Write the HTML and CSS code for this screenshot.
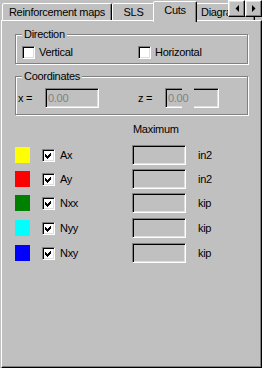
FILE: index.html
```html
<!DOCTYPE html>
<html>
<head>
<meta charset="utf-8">
<link rel="stylesheet" href="styles.css">
</head>
<body>
<div class="tabctl">
  <div class="tabs">
    <div class="tab t1">Reinforcement maps</div>
    <div class="tab t2">SLS</div>
    <div class="tab t3 sel">Cuts</div>
    <div class="tab t4">Diagrams</div>
    <div class="scroller">
      <div class="sbtn"><svg width="4" height="7" viewBox="0 0 4 7"><polygon points="4,0 4,7 0.5,3.5" fill="#000"/></svg></div>
      <div class="sbtn"><svg width="4" height="7" viewBox="0 0 4 7"><polygon points="0,0 0,7 3.5,3.5" fill="#000"/></svg></div>
    </div>
  </div>
  <div class="panel">
    <div class="group dir">
      <span class="gtitle">Direction</span>
      <div class="optrow">
        <label class="opt o1"><span class="chk"></span><span class="lbl">Vertical</span></label>
        <label class="opt"><span class="chk"></span><span class="lbl">Horizontal</span></label>
      </div>
    </div>
    <div class="group coord">
      <span class="gtitle">Coordinates</span>
      <div class="coordrow">
        <span class="clbl">x =</span>
        <span class="field dis cx">0.00</span>
        <span class="clbl">z =</span>
        <span class="field dis cz">0.00</span>
      </div>
    </div>
    <div class="maxhead">Maximum</div>
    <div class="list">
      <div class="row">
        <span class="sw" style="background:#ffff00"></span>
        <span class="chk on"><svg width="9" height="9" viewBox="0 0 9 9"><polygon points="1,3 3,5 7,1 7,4 3,8 1,6" fill="#000" shape-rendering="crispEdges"/></svg></span>
        <span class="name">Ax</span>
        <span class="field"></span>
        <span class="unit">in2</span>
      </div>
      <div class="row">
        <span class="sw" style="background:#ff0000"></span>
        <span class="chk on"><svg width="9" height="9" viewBox="0 0 9 9"><polygon points="1,3 3,5 7,1 7,4 3,8 1,6" fill="#000" shape-rendering="crispEdges"/></svg></span>
        <span class="name">Ay</span>
        <span class="field"></span>
        <span class="unit">in2</span>
      </div>
      <div class="row">
        <span class="sw" style="background:#008000"></span>
        <span class="chk on"><svg width="9" height="9" viewBox="0 0 9 9"><polygon points="1,3 3,5 7,1 7,4 3,8 1,6" fill="#000" shape-rendering="crispEdges"/></svg></span>
        <span class="name">Nxx</span>
        <span class="field"></span>
        <span class="unit">kip</span>
      </div>
      <div class="row">
        <span class="sw" style="background:#00ffff"></span>
        <span class="chk on"><svg width="9" height="9" viewBox="0 0 9 9"><polygon points="1,3 3,5 7,1 7,4 3,8 1,6" fill="#000" shape-rendering="crispEdges"/></svg></span>
        <span class="name">Nyy</span>
        <span class="field"></span>
        <span class="unit">kip</span>
      </div>
      <div class="row">
        <span class="sw" style="background:#0000ff"></span>
        <span class="chk on"><svg width="9" height="9" viewBox="0 0 9 9"><polygon points="1,3 3,5 7,1 7,4 3,8 1,6" fill="#000" shape-rendering="crispEdges"/></svg></span>
        <span class="name">Nxy</span>
        <span class="field"></span>
        <span class="unit">kip</span>
      </div>
    </div>
  </div>
</div>
</body>
</html>
```
FILE: styles.css
```css
* { box-sizing: border-box; }
html, body {
  margin: 0;
  padding: 0;
  background: #c0c0c0;
}
body {
  width: 262px;
  height: 368px;
  overflow: hidden;
  font-family: "Liberation Sans", Arial, sans-serif;
  font-size: 11px;
  line-height: 13px;
  letter-spacing: -0.3px;
  color: #000;
}
.tabctl {
  width: 262px;
  height: 368px;
  display: flex;
  flex-direction: column;
}
.tabs {
  height: 20px;
  flex: none;
  display: flex;
  align-items: flex-end;
  padding-left: 2px;
  position: relative;
}
.tab {
  flex: none;
  height: 17px;
  border: 1px solid;
  border-bottom: 0;
  border-color: #fff #000 transparent #fff;
  border-radius: 2px 2px 0 0;
  box-shadow: inset -1px 0 #808080;
  padding-top: 2px;
  text-align: center;
  white-space: nowrap;
  overflow: hidden;
  background: #c0c0c0;
}
.t1 { width: 110px; }
.t2 { width: 43px; }
.t3 { width: 44px; }
.t4 { width: 60px; text-align: left; padding-left: 5px; }
.tab.sel {
  height: 21px;
  margin: 0 -2px -2px;
  position: relative;
  z-index: 2;
}
.scroller {
  position: absolute;
  top: 0;
  right: 0;
  display: flex;
  z-index: 3;
}
.sbtn {
  width: 17px;
  height: 17px;
  background: #c0c0c0;
  border: 1px solid;
  border-color: #fff #000 #000 #fff;
  box-shadow: inset -1px -1px #808080, inset 1px 1px #dfdfdf;
  display: flex;
  align-items: center;
  justify-content: center;
}
.panel {
  flex: 1;
  margin-left: 1px;
  border: 1px solid;
  border-color: #fff #000 #000 #fff;
  box-shadow: inset -1px -1px #808080;
  padding: 13px 0 0 13px;
}
.group {
  position: relative;
  width: 233px;
  border: 1px solid #808080;
  box-shadow: inset 1px 1px #fff, 1px 1px #fff;
}
.gtitle {
  position: absolute;
  top: -7px;
  left: 6px;
  padding: 0 2px;
  background: #c0c0c0;
}
.dir {
  height: 30px;
  padding: 11px 0 0 6px;
}
.optrow {
  display: flex;
  align-items: center;
}
.opt {
  display: flex;
  align-items: center;
}
.o1 { width: 116px; }
.chk {
  flex: none;
  width: 13px;
  height: 13px;
  background: #fff;
  border: 1px solid;
  border-color: #808080 #fff #fff #808080;
  box-shadow: inset 1px 1px #000, inset -1px -1px #dfdfdf;
  display: flex;
  align-items: center;
  justify-content: center;
}
.lbl { margin-left: 4px; }
.coord {
  margin-top: 12px;
  height: 39px;
  padding: 11px 0 0 2px;
}
.coordrow {
  display: flex;
  align-items: center;
}
.clbl { width: 27px; }
.field {
  flex: none;
  width: 54px;
  height: 20px;
  background: #c0c0c0;
  border: 1px solid;
  border-color: #808080 #fff #fff #808080;
  box-shadow: inset 1px 1px #000, inset -1px -1px #dfdfdf;
  padding: 3px 0 0 2px;
  position: relative;
}
.dis { color: #808080; }
.cx { margin-right: 39px; }
.cz::before,
.cz::after {
  content: "";
  position: absolute;
  left: 16px;
  width: 12px;
  height: 2px;
  background: #c0c0c0;
}
.cz::before { top: -1px; }
.cz::after { bottom: -1px; }
.maxhead {
  margin: 8px 0 0 118px;
}
.list {
  margin-top: 9px;
  display: flex;
  flex-direction: column;
}
.row {
  display: flex;
  align-items: center;
  height: 20px;
}
.row + .row { margin-top: 4px; }
.row:nth-child(n+4) { margin-top: 5px; }
.sw {
  flex: none;
  width: 15px;
  height: 16px;
}
.row .chk { margin-left: 12px; }
.name {
  margin-left: 5px;
  width: 72px;
}
.unit { margin-left: 12px; }
```
